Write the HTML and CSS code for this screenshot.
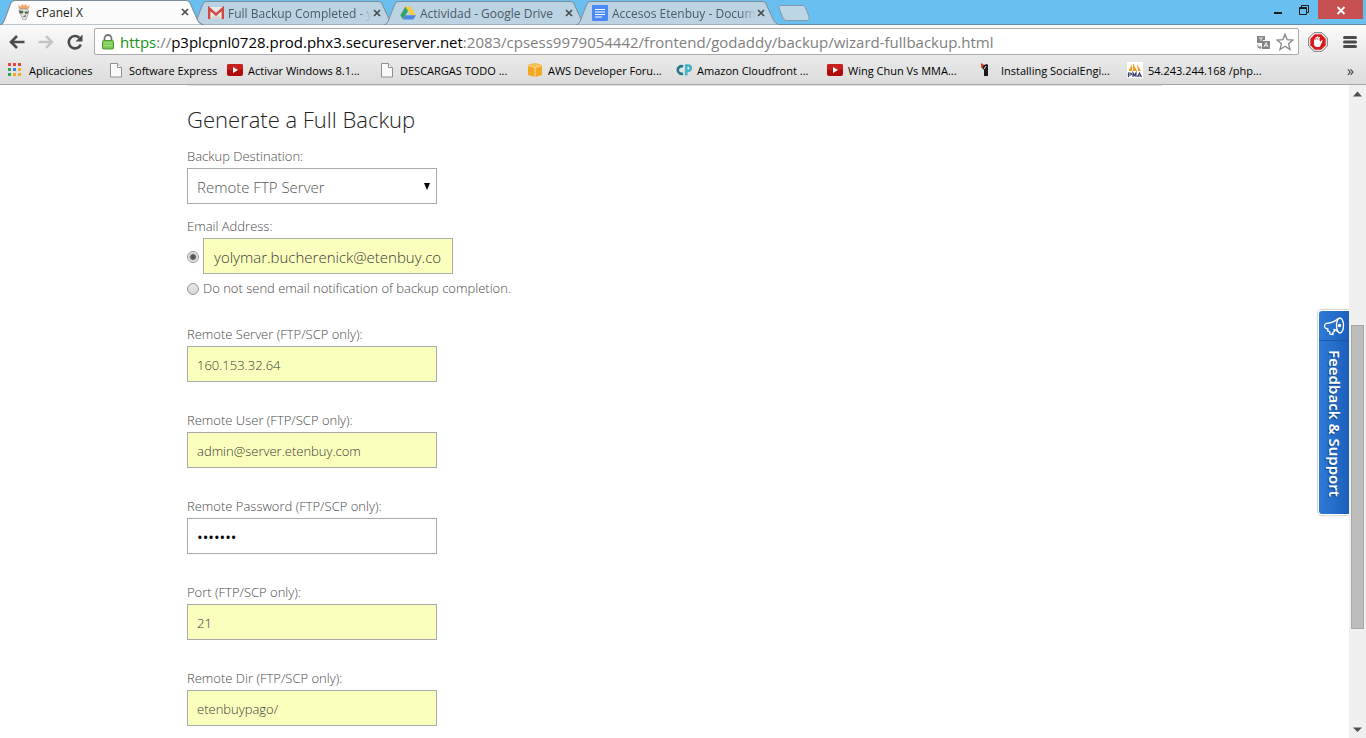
FILE: index.html
```html
<!DOCTYPE html>
<html lang="es">
<head>
<meta charset="utf-8">
<title>cPanel X</title>
<link rel="stylesheet" href="styles.css">
</head>
<body>
<svg class="defs" aria-hidden="true">
  <symbol id="i-close" viewBox="0 0 10 10"><path d="M2 2l6 6M8 2l-6 6" stroke="currentColor" stroke-width="1.700" fill="none"/></symbol>
  <symbol id="i-page" viewBox="0 0 16 16"><path d="M2.500 1.500h7l4 4v9.500h-11z" fill="#fafafa" stroke="#8f8f8f"/><path d="M9.500 1.500v4h4" fill="#fff" stroke="#8f8f8f"/></symbol>
  <symbol id="i-tube" viewBox="0 0 16 16"><rect y="2" width="16" height="12" rx="2" fill="#b00a0a"/><rect y="2" width="16" height="6" rx="2" fill="#c5201c"/><path d="M6 5l5 3-5 3z" fill="#fff"/></symbol>
  <symbol id="i-tab" viewBox="0 0 204 24" preserveAspectRatio="none"><path d="M0 24C3 23 4 21 5 18L10 5C11 2 12 .5 15 .5H186C189 .5 190 2 191 5L197 18C198 21 200 23 204 24z" fill="currentColor" stroke="#7d8d99"/></symbol>
</svg>
<header class="browser">
  <div class="tabstrip">
    <nav class="tabs">
      <div class="tab tab-active">
        <svg class="tab-shape"><use href="#i-tab"/></svg>
        <div class="tab-body">
          <svg class="icon" viewBox="0 0 16 16"><path d="M3 5L2 1l3 1.500L6 0l2 1.500L10 0l1 2.500L14 1l-1.500 4z" fill="#f2a96a"/><path d="M4 5h7l2 2-1.500 5-1.500 3.500-3 .5-1.500-4-2-3z" fill="#e4e4de" stroke="#888" stroke-width=".6"/><path d="M2.500 6.500l5 .5-.8 2.500H4zM8.500 7.500h4l-1 2.200H9z" fill="#55684f"/><path d="M7.500 12.500l2.500-.7" stroke="#333"/></svg>
          <span class="tab-title">cPanel X</span>
          <button class="tab-close" aria-label="Cerrar"><svg viewBox="0 0 10 10"><use href="#i-close"/></svg></button>
        </div>
      </div>
      <div class="tab">
        <svg class="tab-shape"><use href="#i-tab"/></svg>
        <div class="tab-body">
          <svg class="icon" viewBox="0 0 16 16"><rect y="2" width="16" height="12" fill="#ecebea"/><path d="M2 14l5-5h2l5 5z" fill="#d5d4d3"/><path d="M1.200 14V3.500L8 9.500l6.800-6V14" fill="none" stroke="#cf4a42" stroke-width="2.400"/></svg>
          <span class="tab-title tab-fade">Full Backup Completed - y</span>
          <button class="tab-close" aria-label="Cerrar"><svg viewBox="0 0 10 10"><use href="#i-close"/></svg></button>
        </div>
      </div>
      <div class="tab">
        <svg class="tab-shape"><use href="#i-tab"/></svg>
        <div class="tab-body">
          <svg class="icon" viewBox="0 0 16 16"><path d="M5.500 1.500L8 6 3 14.500.3 10.300z" fill="#35a26b"/><path d="M5.500 1.500h5L16 10.300h-5.200z" fill="#f5cc3d"/><path d="M5.600 10.300H16l-2.700 4.200H3z" fill="#4c86e0"/></svg>
          <span class="tab-title">Actividad - Google Drive</span>
          <button class="tab-close" aria-label="Cerrar"><svg viewBox="0 0 10 10"><use href="#i-close"/></svg></button>
        </div>
      </div>
      <div class="tab">
        <svg class="tab-shape"><use href="#i-tab"/></svg>
        <div class="tab-body">
          <svg class="icon" viewBox="0 0 16 16"><rect width="16" height="16" rx="1" fill="#4a8af4"/><path d="M3 4.500h10M3 7h10M3 9.500h10M3 12h7" stroke="#fff" stroke-width="1.200"/></svg>
          <span class="tab-title tab-fade">Accesos Etenbuy - Docum</span>
          <button class="tab-close" aria-label="Cerrar"><svg viewBox="0 0 10 10"><use href="#i-close"/></svg></button>
        </div>
      </div>
      <button class="new-tab" aria-label="Nueva pestaña"><svg viewBox="0 0 32 16"><path d="M2.500.5H24c2 0 3 1 3.500 2L31 12c.6 2 0 3.500-2 3.500H8.500C6.500 15.500 5.500 14 5 13L1 3C.5 1.500 1 .5 2.500.5z" fill="#bcd6e6" stroke="#8099ab"/></svg></button>
    </nav>
    <div class="window-controls">
      <button class="win" aria-label="Minimizar"><svg viewBox="0 0 10 18"><path d="M1 12h8" stroke="#1b1b1b" stroke-width="2"/></svg></button>
      <button class="win" aria-label="Restaurar"><svg viewBox="0 0 10 18"><path d="M.5 6.500h7v7h-7zM.5 7.500h7M2.500 6.500v-2h7v7h-2" stroke="#1b1b1b" fill="none"/></svg></button>
      <button class="win win-close" aria-label="Cerrar ventana"><svg viewBox="0 0 10 18"><path d="M1.500 6l7 7M8.500 6l-7 7" stroke="#fff" stroke-width="1.800"/></svg></button>
    </div>
  </div>
  <div class="toolbar">
    <button class="tool" aria-label="Atrás"><svg viewBox="0 0 16 16"><path d="M15.500 8H2M8 2L2 8l6 6" fill="none" stroke="#4b4b4b" stroke-width="2.600"/></svg></button>
    <button class="tool" aria-label="Adelante" disabled><svg viewBox="0 0 16 16"><path d="M.5 8H14M8 2l6 6-6 6" fill="none" stroke="#c4c4c4" stroke-width="2.400"/></svg></button>
    <button class="tool" aria-label="Recargar"><svg viewBox="0 0 16 16"><path d="M13.800 10.500A6.200 6.200 0 1 1 12.300 3.700" fill="none" stroke="#4b4b4b" stroke-width="2.600"/><path d="M15.500.5v7h-7z" fill="#4b4b4b"/></svg></button>
    <div class="omnibox">
      <svg class="lock" viewBox="0 0 12 16"><path d="M2.500 8V4.500a3.500 3.500 0 0 1 7 0V8" fill="none" stroke="#777" stroke-width="1.800"/><rect x=".5" y="6.500" width="11" height="8.500" rx="1" fill="#7cc855" stroke="#4f9a37"/><path d="M2 9h8M2 11.500h8" stroke="#a5de86"/></svg>
      <p class="url"><span class="url-scheme">https</span>://<span class="url-host">p3plcpnl0728.prod.phx3.secureserver.net</span>:2083/cpsess9979054442/frontend/godaddy/backup/wizard-fullbackup.html</p>
      <button class="omni-btn" aria-label="Traducir"><svg viewBox="0 0 14 16"><path d="M1 2h8v4H7v3H1z" fill="#858585"/><path d="M3 4h4M5 4v3" stroke="#eee"/><rect x="6" y="7" width="8" height="8" fill="#858585"/><path d="M8 13l2-4.500L12 13M9 11.500h2" stroke="#eee" fill="none"/><path d="M2 10.500v3h3M3.500 12l1.500 1.500L3.500 15" stroke="#858585" fill="none"/></svg></button>
      <button class="omni-btn" aria-label="Marcador"><svg class="star" viewBox="0 0 18 18"><path d="M9 1.200l2.100 5.400 5.900.4-4.500 3.700 1.500 5.800L9 13.300l-5 3.200 1.500-5.800L1 7l5.900-.4z" fill="#fff" stroke="#888" stroke-width="1.300"/></svg></button>
    </div>
    <button class="tool tool-block" aria-label="AdBlock"><svg viewBox="0 0 20 20"><path d="M6 .7h8L19.300 6v8L14 19.300H6L.7 14V6z" fill="#f7f7f7" stroke="#777"/><path d="M6.700 2.300h6.600l4.400 4.400v6.600l-4.400 4.400H6.700l-4.400-4.400V6.700z" fill="#d81a1e"/><path d="M6 10.500V8c0-1 1.400-1 1.400 0V5.800c0-1 1.500-1 1.500 0V5c0-1 1.500-1 1.500 0v.8c0-1 1.500-1 1.500 0V10l1.500-1.500c.8-.7 1.600 0 1 .8L12.500 13.500c-.5 1-1 1.500-2 1.500H9c-2 0-3-1.500-3-3z" fill="#fff"/><path d="M7.900 8V6M9.600 8V5.500M11.200 8.500V6" stroke="#d81a1e" stroke-width=".5"/></svg></button>
    <button class="tool tool-menu" aria-label="Menú"><svg viewBox="0 0 14 14"><path d="M1.500 2.500h11M1.500 7h11M1.500 11.500h11" stroke="#4b4b4b" stroke-width="3" stroke-linecap="round"/></svg></button>
  </div>
  <nav class="bookmarks">
    <a class="bookmark" href="#"><svg class="icon" viewBox="0 0 16 16"><path d="M0 1h3v3H0zM5 1h3v3H5zM10 1h3v3h-3z" fill="#e5453a"/><path d="M0 6h3v3H0z" fill="#2ea256"/><path d="M5 6h3v3H5z" fill="#3b82ee"/><path d="M10 6h3v3h-3z" fill="#f0ac1b"/><path d="M0 11h3v3H0z" fill="#2ea256"/><path d="M5 11h3v3H5zM10 11h3v3h-3z" fill="#f0ac1b"/></svg><span>Aplicaciones</span></a>
    <a class="bookmark" href="#"><svg class="icon" viewBox="0 0 16 16"><use href="#i-page"/></svg><span>Software Express</span></a>
    <a class="bookmark" href="#"><svg class="icon" viewBox="0 0 16 16"><use href="#i-tube"/></svg><span>Activar Windows 8.1...</span></a>
    <a class="bookmark" href="#"><svg class="icon" viewBox="0 0 16 16"><use href="#i-page"/></svg><span>DESCARGAS TODO ...</span></a>
    <a class="bookmark" href="#"><svg class="icon" viewBox="0 0 16 16"><path d="M1 3l7-2 7 2v10l-7 2-7-2z" fill="#f3a722"/><path d="M1 3l7 2 7-2-7-2z" fill="#f9bf50"/><path d="M8 5v10M1 3.500l7 2 7-2" stroke="#f8dca0" fill="none"/></svg><span>AWS Developer Foru...</span></a>
    <a class="bookmark" href="#"><svg class="icon" viewBox="0 0 16 16"><path d="M7 4.500a3.800 3.800 0 1 0 0 7" fill="none" stroke="#23788a" stroke-width="2.600"/><path d="M10.200 13.500v-10h1.800a2.500 2.500 0 0 1 0 5.500h-1.500" fill="none" stroke="#45b3c4" stroke-width="2.600"/></svg><span>Amazon Cloudfront ...</span></a>
    <a class="bookmark" href="#"><svg class="icon" viewBox="0 0 16 16"><use href="#i-tube"/></svg><span>Wing Chun Vs MMA...</span></a>
    <a class="bookmark" href="#"><svg class="icon" viewBox="0 0 16 16"><path d="M1 1l4 2.500L1 6z" fill="#e5391f"/><path d="M4 3l3-1 1 1v11H4V8L2 6z" fill="#191919"/><path d="M4 7l2-3" stroke="#eee"/></svg><span>Installing SocialEngi...</span></a>
    <a class="bookmark" href="#"><svg class="icon" viewBox="0 0 16 16"><rect width="16" height="16" fill="#fff"/><path d="M5 2v7H1.500zM6 1l4 8H6zM10 2l4 7h-3z" fill="#f59b22"/><path d="M1.500 15v-4h1.800c1.500 0 1.500 2 0 2H2M6 15v-4l1.500 2.500L9 11v4M10.500 15l2-4 2 4M11.500 14h2" fill="none" stroke="#353b6e" stroke-width="1.200"/></svg><span>54.243.244.168 /php...</span></a>
    <button class="more" aria-label="Más marcadores">»</button>
  </nav>
</header>
<div class="viewport">
  <main class="page">
    <form class="backup">
      <h1 class="title">Generate a Full Backup</h1>
      <div class="field field-near">
        <label for="dest">Backup Destination:</label>
        <div class="select-wrap">
          <select class="control select" id="dest"><option>Remote FTP Server</option></select>
          <svg class="arrow" viewBox="0 0 6 7"><path d="M0 0h6L3 7z"/></svg>
        </div>
      </div>
      <div class="field field-email">
        <label for="email">Email Address:</label>
        <div class="choice">
          <input class="radio" type="radio" name="notify" aria-label="Email Address" checked>
          <input class="control filled control-large" id="email" type="text" value="yolymar.bucherenick@etenbuy.co">
        </div>
        <div class="choice choice-text">
          <input class="radio" type="radio" name="notify" id="none">
          <label for="none">Do not send email notification of backup completion.</label>
        </div>
      </div>
      <div class="field"><label for="server">Remote Server (FTP/SCP only):</label><input class="control filled" id="server" type="text" value="160.153.32.64"></div>
      <div class="field"><label for="user">Remote User (FTP/SCP only):</label><input class="control filled" id="user" type="text" value="admin@server.etenbuy.com"></div>
      <div class="field"><label for="pass">Remote Password (FTP/SCP only):</label><input class="control password" id="pass" type="password" value="1234567"></div>
      <div class="field"><label for="port">Port (FTP/SCP only):</label><input class="control filled" id="port" type="text" value="21"></div>
      <div class="field"><label for="dir">Remote Dir (FTP/SCP only):</label><input class="control filled" id="dir" type="text" value="etenbuypago/"></div>
    </form>
  </main>
  <div class="scrollbar">
    <svg class="scroll-arrow" viewBox="0 0 17 17"><path d="M4 11.500h9L8.500 6.500z" fill="#505050"/></svg>
    <div class="scroll-track"><div class="scroll-thumb"></div></div>
    <svg class="scroll-arrow" viewBox="0 0 17 17"><path d="M4 6.500h9L8.500 11z" fill="#505050"/></svg>
  </div>
  <button class="feedback">
    <svg class="horn" viewBox="0 0 22 20"><g fill="none" stroke="#fff" stroke-width="1.300" stroke-linejoin="round"><path d="M15 2.500C12 6 8 7 3 7.500c-2 1-2 4 0 5l2 .3-.5 2 2 .7.5 2.500 3 .5v-2.500l1.500-.5-.5-2c2 .3 3 1 4.500 2.500"/><ellipse cx="17" cy="9.500" rx="3.500" ry="7.500"/></g><circle cx="16.500" cy="9.500" r="1.700" fill="#fff"/></svg>
    <span class="feedback-text">Feedback &amp; Support</span>
  </button>
</div>
</body>
</html>
```
FILE: styles.css
```css
* { box-sizing: border-box; }
body {
  margin: 0;
  height: 100vh;
  display: flex;
  flex-direction: column;
  overflow: hidden;
  background: #fff;
  font-family: "Open Sans", "Noto Sans", sans-serif;
}
button { border: 0; padding: 0; background: none; color: inherit; font: inherit; display: block; }
svg { display: block; }
.defs { position: absolute; width: 0; height: 0; }
.icon { width: 16px; height: 16px; flex: none; }

/* Browser frame */
.browser { flex: none; border-bottom: 1px solid #a6a6a6; font-size: 12px; }
.tabstrip { display: flex; justify-content: space-between; height: 25px; background: #68bff0; border-bottom: 1px solid #5e8ca8; }
.tabs { display: flex; align-items: flex-end; height: 25px; }
.tab { display: grid; grid-template-columns: 100%; width: 204px; height: 24px; margin-right: -12px; color: #bcd3e3; }
.tab-active { color: #fbfbfb; z-index: 1; height: 25px; }
.tab-shape, .tab-body { grid-area: 1 / 1; width: 100%; height: 24px; }
.tab-active .tab-shape { height: 25px; }
.tab-body { display: flex; align-items: center; gap: 4px; padding: 0 14px 0 16px; color: #4a5a66; z-index: 1; }
.tab-active .tab-body { color: #222; }
.tab-title { flex: 1; margin-right: -4px; white-space: nowrap; }
.tab-fade { mask-image: linear-gradient(to left, transparent, #000 16px); }
.tab-close { color: #4d4d4d; }
.tab-close svg { width: 10px; height: 10px; }
.new-tab { margin: 0 0 4px 10px; }
.new-tab svg { width: 32px; height: 16px; }
.window-controls { display: flex; gap: 16px; padding-right: 3px; }
.win { height: 19px; }
.win svg { width: 10px; height: 18px; margin: 0 auto; }
.win-close { width: 45px; background: #c75050; margin-left: -7px; }

.toolbar { display: flex; align-items: center; gap: 13px; height: 33px; padding: 0 9px; background: linear-gradient(#fafafa, #e9e9e9); }
.tool svg { width: 16px; height: 16px; }
.tool-block { margin-left: -4px; }
.tool-block svg { width: 20px; height: 20px; }
.tool-menu { margin-left: 2px; }
.tool-menu svg { width: 14px; height: 14px; }
.omnibox { flex: 1; min-width: 0; display: flex; align-items: center; gap: 6px; height: 27px; padding: 0 4px 0 7px; margin-left: -2px; background: #fff; border: 1px solid #aaa; border-radius: 2px; }
.lock { width: 12px; height: 16px; }
.url { flex: 1; min-width: 0; margin: 0; overflow: hidden; white-space: nowrap; font-size: 15px; line-height: 24px; color: #808080; }
.url-scheme { color: #159415; }
.url-host { color: #000; }
.omni-btn svg { width: 14px; height: 16px; }
.omni-btn .star { width: 18px; height: 18px; }

.bookmarks {
  display: grid;
  grid-template-columns: 100px 119px 152px 148px 149px 151px 153px 147px 1fr auto;
  align-items: center;
  height: 26px;
  padding: 0 12px 2px 8px;
  background: linear-gradient(#e9e9e9, #dcdcdc);
  font-size: 11px;
}
.bookmark { display: flex; align-items: center; gap: 5px; min-width: 0; color: #000; text-decoration: none; white-space: nowrap; }
.more { font-size: 14px; color: #333; }

/* Page */
.viewport { position: relative; flex: 1; min-height: 0; display: flex; }
.page { flex: 1; min-width: 0; overflow: hidden; }
.backup { max-width: 975px; margin: 0 auto; border-top: 1px solid #e4e4e4; padding-top: 17px; font-weight: 300; font-size: 13px; line-height: 20px; color: #4a4a4a; }
.title { margin: 0 0 11px; font-size: 22px; line-height: 32px; font-weight: 300; color: #222; }
.field { display: flex; flex-direction: column; align-items: flex-start; gap: 2px; margin-bottom: 28px; }
.field-near { margin-bottom: 12px; }
.field-email { margin-bottom: 26px; }
.control { width: 250px; height: 36px; padding: 2px 9px 0; border: 1px solid #aaa; border-radius: 0; background: #fff; font: inherit; color: #3a3a3a; outline: 0; }
.filled { background: #faffbd; }
.control-large { padding: 2px 10px 0; font-size: 15px; }
.password { color: #000; font-size: 15px; font-weight: 400; }
.select-wrap { display: grid; align-items: center; justify-items: end; }
.select { grid-area: 1 / 1; appearance: none; padding: 2px 9px 0; font-size: 15px; color: #555; }
.arrow { grid-area: 1 / 1; width: 6px; height: 7px; margin-right: 7px; pointer-events: none; }
.choice { display: flex; align-items: center; gap: 4px; }
.choice-text { margin-top: 2px; }
.radio { appearance: none; width: 12px; height: 12px; margin: 2px 0 0; border: 1px solid #999; border-radius: 50%; background: linear-gradient(#e8e8e8, #d8d8d8); }
.radio:checked { background: radial-gradient(#555 2px, #e8e8e8 4px); }

.scrollbar { display: flex; flex-direction: column; width: 17px; background: #f0f0f0; }
.scroll-arrow { width: 17px; height: 17px; }
.scroll-track { flex: 1; display: grid; grid-template-rows: 223fr 304fr 92fr; padding: 0 2px; }
.scroll-thumb { grid-row: 2; background: #bcbcbc; border: 1px solid #a8a8a8; }

.feedback {
  position: absolute;
  right: 17px;
  top: 225px;
  width: 31px;
  height: 205px;
  border: 1px solid #fff;
  border-right: 0;
  border-radius: 4px 0 0 4px;
  background: linear-gradient(to right, #2f7bd8, #1b60bb);
  box-shadow: 0 0 2px #777;
  clip-path: inset(-3px 0 -3px -3px);
  color: #fff;
  display: flex;
  flex-direction: column;
  align-items: center;
}
.horn { width: 22px; height: 20px; margin: 5px 0 4px; }
.feedback-text { flex: 1; width: 100%; writing-mode: vertical-rl; border-top: 1px solid #1a57a8; padding-top: 9px; font-family: "Noto Sans", sans-serif; font-size: 15px; font-weight: 600; line-height: 28px; text-align: left; text-shadow: 1px 1px 1px #123f80; white-space: nowrap; }
```
